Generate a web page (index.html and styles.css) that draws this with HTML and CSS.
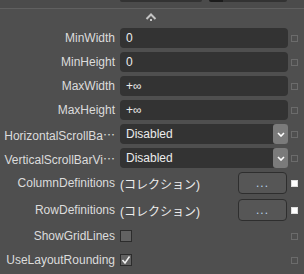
FILE: index.html
```html
<!DOCTYPE html>
<html lang="ja">
<head>
    <meta charset="UTF-8">
    <title>Properties</title>
    <link rel="stylesheet" href="styles.css">
</head>
<body>
    <div class="panel">
        <div class="top">
            <span class="stub stub-a"></span>
            <span class="stub stub-b"></span>
        </div>
        <div class="collapse">
            <svg width="12" height="8" viewBox="0 0 12 8"><polyline points="1.5,6 6,1.5 10.5,6" fill="none" stroke="#c4c4c4" stroke-width="2"/><rect x="5" y="6" width="2" height="2" fill="#c4c4c4"/></svg>
        </div>

        <div class="row">
            <span class="name">MinWidth</span>
            <div class="value box">0</div>
            <span class="mark"></span>
        </div>
        <div class="row">
            <span class="name">MinHeight</span>
            <div class="value box">0</div>
            <span class="mark"></span>
        </div>
        <div class="row">
            <span class="name">MaxWidth</span>
            <div class="value box">+∞</div>
            <span class="mark"></span>
        </div>
        <div class="row">
            <span class="name">MaxHeight</span>
            <div class="value box">+∞</div>
            <span class="mark"></span>
        </div>
        <div class="row">
            <span class="name">HorizontalScrollBa⋯</span>
            <div class="value box select">
                <span class="select-text">Disabled</span>
                <span class="arrow"><svg width="8" height="5" viewBox="0 0 8 5"><polyline points="1,1 4,4 7,1" fill="none" stroke="#fff" stroke-width="1.6"/></svg></span>
            </div>
            <span class="mark"></span>
        </div>
        <div class="row">
            <span class="name">VerticalScrollBarVi⋯</span>
            <div class="value box select">
                <span class="select-text">Disabled</span>
                <span class="arrow"><svg width="8" height="5" viewBox="0 0 8 5"><polyline points="1,1 4,4 7,1" fill="none" stroke="#fff" stroke-width="1.6"/></svg></span>
            </div>
            <span class="mark"></span>
        </div>

        <div class="row row-collection first-collection">
            <span class="name">ColumnDefinitions</span>
            <div class="value collection">
                <span class="collection-text">(コレクション)</span>
                <button class="more">...</button>
            </div>
            <span class="mark set"></span>
        </div>
        <div class="row row-collection">
            <span class="name">RowDefinitions</span>
            <div class="value collection">
                <span class="collection-text">(コレクション)</span>
                <button class="more">...</button>
            </div>
            <span class="mark set"></span>
        </div>

        <div class="row row-check first-check">
            <span class="name">ShowGridLines</span>
            <div class="value"><span class="checkbox"></span></div>
            <span class="mark"></span>
        </div>
        <div class="row row-check">
            <span class="name">UseLayoutRounding</span>
            <div class="value"><span class="checkbox"><svg width="10" height="10" viewBox="0 0 10 10"><polyline points="1.5,5 4,8 8.5,1.5" fill="none" stroke="#f2f2f2" stroke-width="1.5"/></svg></span></div>
            <span class="mark"></span>
        </div>
    </div>
</body>
</html>
```

FILE: styles.css
```css
body {
    margin: 0;
    background-color: #4f4f4f;
    font-family: "Liberation Sans", "Noto Sans CJK JP", sans-serif;
    font-size: 12px;
    color: #dcdcdc;
}
.panel {
    width: 304px;
    height: 274px;
    overflow: hidden;
}
.top {
    display: flex;
    gap: 7px;
    height: 8px;
    padding-left: 120px;
    border-bottom: 1px solid #606060;
    box-sizing: border-box;
    height: 9px;
    background-color: #4b4b4b;
}
.stub {
    height: 2px;
    background-color: #333;
    border-radius: 0 0 3px 3px;
}
.stub-a {
    width: 82px;
}
.stub-b {
    width: 78px;
    background: linear-gradient(to right, #1c1c1c 14px, #333 14px);
}
.collapse {
    display: flex;
    justify-content: center;
    padding-top: 4px;
    height: 15px;
}
.collapse svg {
    margin-left: -2px;
}
.row {
    display: flex;
    align-items: center;
    height: 20px;
    margin-bottom: 4px;
}
.name {
    width: 120px;
    padding-right: 5px;
    box-sizing: border-box;
    text-align: right;
    white-space: nowrap;
    overflow: hidden;
    flex-shrink: 0;
}
.value {
    width: 168px;
    flex-shrink: 0;
    display: flex;
    align-items: center;
}
.mark {
    width: 7px;
    height: 7px;
    margin-left: 3px;
    border: 1px solid #6b6b6b;
    box-sizing: border-box;
}
.mark.set {
    background-color: #fff;
    border-color: #ddd;
}
.box {
    height: 20px;
    background-color: #333;
    border-radius: 4px;
    padding-left: 6px;
    box-sizing: border-box;
    color: #ececec;
}
.select {
    padding-right: 0;
}
.select-text {
    flex: 1;
}
.arrow {
    width: 15px;
    height: 20px;
    background-color: #7b7b7b;
    border-radius: 3px;
    display: flex;
    align-items: center;
    justify-content: center;
}
.first-collection {
    margin-top: 2px;
}
.row-collection {
    height: 22px;
    margin-bottom: 5px;
}
.collection-text {
    flex: 1;
    color: #ececec;
}
.more {
    width: 49px;
    height: 22px;
    margin-right: 1px;
    padding: 0;
    border: 1px solid #2e2e2e;
    border-radius: 4px;
    background-color: #565656;
    color: #b9d3ea;
    font-family: "Liberation Sans", sans-serif;
    font-size: 12px;
    letter-spacing: 1px;
}
.first-check {
    margin-top: -2px;
}
.row-check {
    height: 24px;
    margin-bottom: 0;
}
.checkbox {
    width: 12px;
    height: 12px;
    border: 1px solid #2c2c2c;
    background-color: #626262;
    box-sizing: border-box;
    display: flex;
    align-items: center;
    justify-content: center;
}
```
